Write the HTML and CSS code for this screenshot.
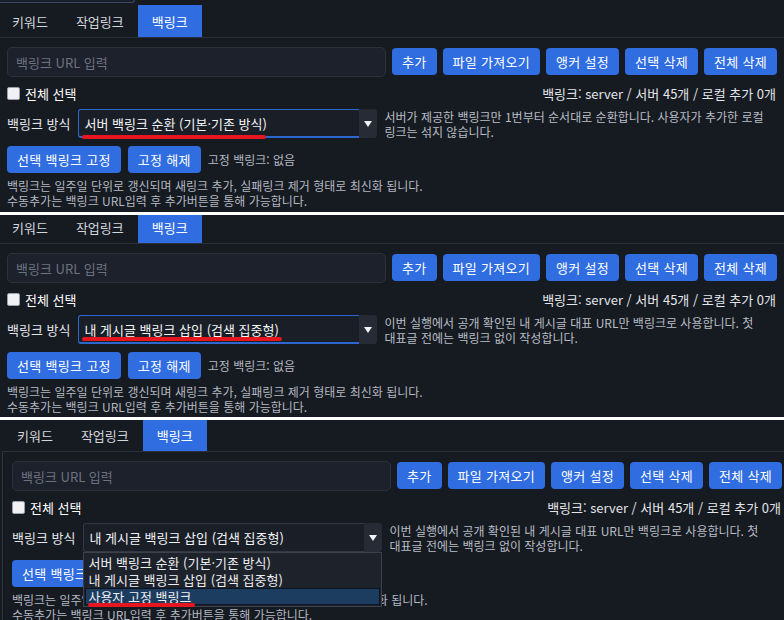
FILE: index.html
```html
<!DOCTYPE html>
<html lang="ko">
<head>
<meta charset="utf-8">
<title>백링크 설정</title>
<link rel="stylesheet" href="styles.css">
</head>
<body>

<div class="shot shot--1">
  <div class="prev-box"></div>
  <div class="app">
    <nav class="tabs">
      <span class="tab">키워드</span>
      <span class="tab">작업링크</span>
      <span class="tab tab--active">백링크</span>
    </nav>
    <section class="pane">
      <div class="row row--input">
        <input class="url-input" type="text" placeholder="백링크 URL 입력">
        <div class="btn-group">
          <button class="btn">추가</button>
          <button class="btn">파일 가져오기</button>
          <button class="btn">앵커 설정</button>
          <button class="btn">선택 삭제</button>
          <button class="btn">전체 삭제</button>
        </div>
      </div>
      <div class="row row--meta">
        <label class="check"><input type="checkbox" class="check-box"><span>전체 선택</span></label>
        <span class="stats">백링크: server / 서버 45개 / 로컬 추가 0개</span>
      </div>
      <div class="row row--mode">
        <span class="mode-label">백링크 방식</span>
        <div class="select select--focus">
          <span class="select-value">서버 백링크 순환 (기본·기존 방식)</span>
          <span class="select-arrow"><svg width="8" height="6" viewBox="0 0 8 6"><polygon points="0,0 8,0 4,6" fill="#f2f4f7"/></svg></span>
          <span class="mark mark--one"></span>
        </div>
        <p class="mode-desc">서버가 제공한 백링크만 1번부터 순서대로 순환합니다. 사용자가 추가한 로컬 링크는 섞지 않습니다.</p>
      </div>
      <div class="row row--pin">
        <button class="btn">선택 백링크 고정</button>
        <button class="btn">고정 해제</button>
        <span class="pin-status">고정 백링크: 없음</span>
      </div>
      <div class="notes">
        <p>백링크는 일주일 단위로 갱신되며 새링크 추가, 실패링크 제거 형태로 최신화 됩니다.</p>
        <p>수동추가는 백링크 URL입력 후 추가버튼을 통해 가능합니다.</p>
      </div>
    </section>
  </div>
</div>

<div class="divider"></div>

<div class="shot shot--2">
  <div class="app">
    <nav class="tabs">
      <span class="tab">키워드</span>
      <span class="tab">작업링크</span>
      <span class="tab tab--active">백링크</span>
    </nav>
    <section class="pane">
      <div class="row row--input">
        <input class="url-input" type="text" placeholder="백링크 URL 입력">
        <div class="btn-group">
          <button class="btn">추가</button>
          <button class="btn">파일 가져오기</button>
          <button class="btn">앵커 설정</button>
          <button class="btn">선택 삭제</button>
          <button class="btn">전체 삭제</button>
        </div>
      </div>
      <div class="row row--meta">
        <label class="check"><input type="checkbox" class="check-box"><span>전체 선택</span></label>
        <span class="stats">백링크: server / 서버 45개 / 로컬 추가 0개</span>
      </div>
      <div class="row row--mode">
        <span class="mode-label">백링크 방식</span>
        <div class="select select--focus">
          <span class="select-value">내 게시글 백링크 삽입 (검색 집중형)</span>
          <span class="select-arrow"><svg width="8" height="6" viewBox="0 0 8 6"><polygon points="0,0 8,0 4,6" fill="#f2f4f7"/></svg></span>
          <span class="mark mark--two"></span>
        </div>
        <p class="mode-desc">이번 실행에서 공개 확인된 내 게시글 대표 URL만 백링크로 사용합니다. 첫 대표글 전에는 백링크 없이 작성합니다.</p>
      </div>
      <div class="row row--pin">
        <button class="btn">선택 백링크 고정</button>
        <button class="btn">고정 해제</button>
        <span class="pin-status">고정 백링크: 없음</span>
      </div>
      <div class="notes">
        <p>백링크는 일주일 단위로 갱신되며 새링크 추가, 실패링크 제거 형태로 최신화 됩니다.</p>
        <p>수동추가는 백링크 URL입력 후 추가버튼을 통해 가능합니다.</p>
      </div>
    </section>
  </div>
</div>

<div class="divider"></div>

<div class="shot shot--3">
  <div class="app">
    <nav class="tabs">
      <span class="tab">키워드</span>
      <span class="tab">작업링크</span>
      <span class="tab tab--active">백링크</span>
    </nav>
    <section class="pane">
      <div class="row row--input">
        <input class="url-input" type="text" placeholder="백링크 URL 입력">
        <div class="btn-group">
          <button class="btn">추가</button>
          <button class="btn">파일 가져오기</button>
          <button class="btn">앵커 설정</button>
          <button class="btn">선택 삭제</button>
          <button class="btn">전체 삭제</button>
        </div>
      </div>
      <div class="row row--meta">
        <label class="check"><input type="checkbox" class="check-box"><span>전체 선택</span></label>
        <span class="stats">백링크: server / 서버 45개 / 로컬 추가 0개</span>
      </div>
      <div class="row row--mode">
        <span class="mode-label">백링크 방식</span>
        <div class="select">
          <span class="select-value">내 게시글 백링크 삽입 (검색 집중형)</span>
          <span class="select-arrow"><svg width="8" height="6" viewBox="0 0 8 6"><polygon points="0,0 8,0 4,6" fill="#f2f4f7"/></svg></span>
          <ul class="select-list">
            <li class="option">서버 백링크 순환 (기본·기존 방식)</li>
            <li class="option">내 게시글 백링크 삽입 (검색 집중형)</li>
            <li class="option option--hover">사용자 고정 백링크<span class="mark mark--three"></span></li>
          </ul>
        </div>
        <p class="mode-desc">이번 실행에서 공개 확인된 내 게시글 대표 URL만 백링크로 사용합니다. 첫 대표글 전에는 백링크 없이 작성합니다.</p>
      </div>
      <div class="row row--pin">
        <button class="btn">선택 백링크 고정</button>
        <button class="btn">고정 해제</button>
        <span class="pin-status">고정 백링크: 없음</span>
      </div>
      <div class="notes">
        <p>백링크는 일주일 단위로 갱신되며 새링크 추가, 실패링크 제거 형태로 최신화 됩니다.</p>
        <p>수동추가는 백링크 URL입력 후 추가버튼을 통해 가능합니다.</p>
      </div>
    </section>
  </div>
</div>

</body>
</html>
```

FILE: styles.css
```css
* { box-sizing: border-box; }

html, body {
  margin: 0;
  padding: 0;
}

body {
  width: 784px;
  height: 620px;
  overflow: hidden;
  background: #ffffff;
  font-family: "Noto Sans CJK KR", "Noto Sans", sans-serif;
  font-size: 13px;
  color: #e6e8ec;
}

p { margin: 0; }

.shot {
  position: relative;
  overflow: hidden;
  background: #161a21;
}

.shot--1 { height: 212px; }
.shot--2 { height: 202px; }
.shot--3 { height: 200px; }

.divider {
  height: 3px;
  background: #ffffff;
}

.prev-box {
  width: 138px;
  height: 3px;
  margin-left: -3px;
  border: 1px solid #3a4660;
  border-top: 0;
  border-radius: 0 0 6px 6px;
  background: #1a1f29;
}

.app {
  width: 789px;
  margin-left: -3px;
  margin-top: 2px;
}

.shot--2 .app { margin-top: -4px; }
.shot--3 .app { margin-left: 2px; margin-top: -1px; }

/* tabs */
.tabs {
  display: flex;
  height: 33px;
  padding-left: 1px;
  border-bottom: 1px solid #2a2f3a;
}

.tab {
  display: flex;
  align-items: center;
  padding: 0 14px;
  color: #d3d6dc;
  font-size: 13px;
}

.tab--active {
  background: #2f6de1;
  color: #ffffff;
}

/* pane */
.pane {
  border-left: 1px solid #2e333e;
  padding: 9px 9px 0 9px;
}

.row { display: flex; }

.row--input {
  gap: 6px;
  height: 30px;
}

.url-input {
  flex: 1;
  min-width: 0;
  height: 30px;
  background: #1d212b;
  border: 1px solid #2c313c;
  border-radius: 5px;
  padding: 0 8px;
  font-family: inherit;
  font-size: 13px;
  color: #e6e8ec;
  outline: none;
}

.url-input::placeholder { color: #6c7280; }

.btn-group {
  display: flex;
  gap: 6px;
  padding-top: 1px;
}

.btn {
  height: 27px;
  padding: 0 10px;
  background: #2f6de1;
  border: 0;
  border-radius: 4px;
  color: #ffffff;
  font-family: inherit;
  font-size: 13px;
  letter-spacing: 0.3px;
  white-space: nowrap;
}

.row--meta {
  margin-top: 3px;
  height: 26px;
  align-items: center;
  justify-content: space-between;
}

.check {
  display: flex;
  align-items: center;
  gap: 5px;
  color: #ffffff;
  font-size: 13px;
}

.check-box {
  appearance: none;
  margin: 0;
  width: 13px;
  height: 13px;
  background: #f1f1f3;
  border: 1px solid #9aa0aa;
  border-radius: 2px;
}

.stats {
  color: #e4e6ea;
  font-size: 13px;
  padding-right: 1px;
}

/* mode row */
.row--mode {
  margin-top: 3px;
  align-items: flex-start;
}

.mode-label {
  height: 29px;
  line-height: 29px;
  margin-right: 8px;
  color: #e4e6ea;
}

.select {
  position: relative;
  display: flex;
  flex: none;
  width: 299px;
  height: 29px;
}

.select-value {
  flex: 1;
  display: flex;
  align-items: center;
  padding-left: 5px;
  background: #1a1e27;
  border: 1px solid #323844;
  border-right: 0;
  border-radius: 3px 0 0 3px;
  color: #f3f4f6;
  white-space: nowrap;
}

.select--focus .select-value {
  border-color: #2c66d0;
  border-bottom-width: 2px;
}

.select-arrow {
  width: 18px;
  display: flex;
  align-items: center;
  justify-content: center;
  background: #262b35;
  border-radius: 0 3px 3px 0;
}

.mode-desc {
  margin-left: 7px;
  flex: 1;
  line-height: 15px;
  font-size: 12px;
  color: #b9bdc6;
  word-break: keep-all;
}

.select-list {
  position: absolute;
  top: 100%;
  left: 0;
  width: 100%;
  margin: 0;
  padding: 1px 1px 1px;
  list-style: none;
  background: #1e222b;
  border: 1px solid #3b414d;
  z-index: 2;
}

.option {
  position: relative;
  height: 17px;
  line-height: 17px;
  padding-left: 3px;
  color: #eceef1;
  white-space: nowrap;
}

.option--hover {
  background: #1d3d60;
  box-shadow: inset 0 0 0 1px #0b1422;
}

/* red annotation marks */
.mark {
  position: absolute;
  height: 4px;
  background: #e5161e;
  border-radius: 2px;
}

.mark--one { left: 4px; top: 26px; width: 184px; }
.mark--two { left: 4px; top: 22px; width: 200px; }
.mark--three { left: 3px; top: 15px; width: 107px; }

/* pin row */
.row--pin {
  margin-top: 7px;
  height: 27px;
  align-items: center;
  gap: 7px;
}

.pin-status {
  font-size: 12px;
  color: #b4b8c1;
}

.notes {
  margin-top: 5px;
  font-size: 12px;
  line-height: 15px;
  color: #b4b8c1;
}
```
